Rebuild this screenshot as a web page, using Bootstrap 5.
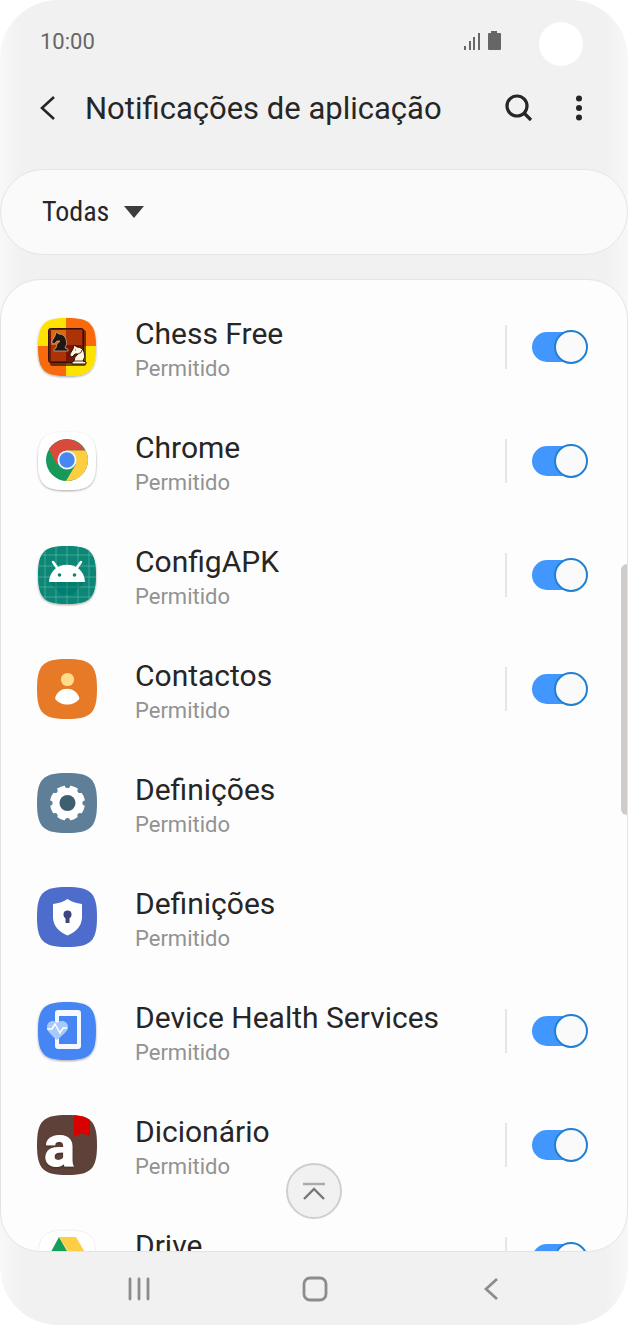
<!DOCTYPE html>
<html lang="pt">
<head>
<meta charset="utf-8">
<meta name="viewport" content="width=device-width, initial-scale=1">
<title>Notificações de aplicação</title>
<link rel="stylesheet" href="https://cdn.jsdelivr.net/npm/bootstrap@5.3.0/dist/css/bootstrap.min.css">
<style>
  body { background: #fff; color: #262626; font-family: Roboto, "Liberation Sans", sans-serif; }
  svg { display: block; flex: none; }
  .phone { border-radius: 58px; background: linear-gradient(90deg, #f8f8f8, #f4f4f4 12px, #f1f1f1 24px, #f1f1f1 calc(100% - 24px), #f4f4f4 calc(100% - 12px), #f8f8f8); }
  .status-bar { height: 80px; padding-top: 2px; padding-left: 40px; padding-right: 127px; color: #666; font-size: 22px; }
  .camera { top: 22px; right: 45px; width: 44px; height: 44px; background: #fff; }
  .title-bar { height: 56px; margin-bottom: 33px; padding-left: 37px; padding-right: 46px; }
  .title-bar h1 { font-size: 31px; line-height: 40px; padding-top: 2px; font-weight: 400; margin-left: 27px; }
  .more { margin-left: 43px; }
  .plain { border: 0; padding: 0; background: transparent; color: inherit; }
  .panel { border: 1px solid #e4e4e4; background: #fdfdfd; }
  .filter { height: 86px; border-radius: 43px; margin-bottom: 24px; padding-left: 41px; background: #fafafa; }
  .filter button { font-family: "Roboto Condensed", Roboto, "Liberation Sans", sans-serif; font-size: 28px; gap: 15px; }
  .app-list { border-radius: 40px; padding-top: 10px; min-height: 0; }
  .app-row { height: 114px; padding-left: 36px; padding-right: 39px; }
  .app-icon { width: 60px; height: 60px; margin-right: 38px; overflow: visible; }
  .app-text { padding-top: 8px; }
  .app-name { font-size: 30px; line-height: 36px; }
  .app-state { font-size: 22px; line-height: 34px; color: #929292; }
  .divider { width: 2px; height: 44px; background: #e6e6e6; margin-right: 25px; }
  .toggle { appearance: none; position: relative; width: 56px; height: 34px; margin: 0; flex: none; }
  .toggle::before { content: ""; position: absolute; top: 2px; left: 0; width: 50px; height: 30px; border-radius: 15px; background: #bbb; }
  .toggle::after { content: ""; position: absolute; top: 0; left: 0; width: 34px; height: 34px; border-radius: 50%; border: 2px solid #999; background: #fafafa; }
  .toggle:checked::before { background: #4297ff; }
  .toggle:checked::after { left: auto; right: 0; border-color: #2280d2; }
  .scroll-thumb { top: 284px; right: -1px; width: 7px; height: 251px; border-radius: 6px 0 0 6px; background: #cecbc8; }
  .to-top { bottom: 32px; left: 50%; margin-left: -28px; width: 56px; height: 56px; border: 2px solid #cfcfcf; border-radius: 50%; background: #f1f1f1; padding: 0; }
  .system-nav { height: 73px; padding-left: 51px; padding-right: 49px; }
</style>
</head>
<body>
<svg width="0" height="0" class="position-absolute" aria-hidden="true">
  <defs>
    <path id="squircle" d="M30 0C54 0 60 6 60 30S54 60 30 60 0 54 0 30 6 0 30 0Z"/>
    <clipPath id="clip"><use href="#squircle"/></clipPath>
    <clipPath id="clipSmall"><path d="M30 1C53 1 59 7 59 30S53 59 30 59 1 53 1 30 7 1 30 1Z"/></clipPath>
    <path id="knight" d="M3 19V17L5 16Q5 12 9 9L6 9 3 12 1 11 1 9 4 4 5 0 8 2Q13 2 15 7 17 12 14 16L17 17V19Z"/>
    <filter id="shade" x="-20%" y="-20%" width="140%" height="140%"><feDropShadow dx="0" dy="1" stdDeviation="1" flood-opacity="0.35"/></filter>
  </defs>
</svg>

<div class="phone d-flex flex-column vh-100 position-relative overflow-hidden">
  <header class="flex-shrink-0">
    <div class="status-bar d-flex align-items-center justify-content-between">
      <time>10:00</time>
      <svg width="37" height="20" viewBox="0 0 37 20" fill="#666"><path d="M0 15h2v4H0zM5 10h2v9H5zM9 6h2v13H9zM14 2h2v17h-2zM27 0h6v2h3q1 0 1 1v15q0 1-1 1H25q-1 0-1-1V3q0-1 1-1h2z"/></svg>
    </div>
    <div class="camera position-absolute rounded-circle"></div>
    <div class="title-bar d-flex align-items-center">
      <button class="plain" type="button" aria-label="Voltar"><svg width="21" height="26" viewBox="0 0 21 26" fill="none" stroke="#262626" stroke-width="2.600"><path d="M17 2 5 13l12 11"/></svg></button>
      <h1 class="mb-0 flex-grow-1">Notificações de aplicação</h1>
      <button class="plain" type="button" aria-label="Procurar"><svg width="28" height="28" viewBox="0 0 28 28" fill="none" stroke="#262626" stroke-width="3.200"><circle cx="12" cy="12" r="10"/><path d="m19 19 7 7"/></svg></button>
      <button class="plain more" type="button" aria-label="Mais opções"><svg width="6" height="26" viewBox="0 0 6 26" fill="#262626"><circle cx="3" cy="3.500" r="3"/><circle cx="3" cy="13" r="3"/><circle cx="3" cy="22.500" r="3"/></svg></button>
    </div>
  </header>

  <div class="panel filter flex-shrink-0 d-flex align-items-center">
    <button class="plain d-flex align-items-center" type="button">Todas <svg width="20" height="12" viewBox="0 0 20 12"><path fill="#3c3c3c" d="M0 0h20L10 12z"/></svg></button>
  </div>

  <main class="panel app-list flex-grow-1 position-relative overflow-hidden">
    <div class="app-row d-flex align-items-center">
      <svg class="app-icon" viewBox="0 0 60 60" aria-hidden="true"><g filter="url(#shade)"><g clip-path="url(#clipSmall)"><path fill="#fee204" d="M0 0h29v29H0zM29 29h31v31H29z"/><path fill="#f86a08" d="M29 0h31v29H29zM0 29h29v31H0z"/></g></g><rect x="13" y="13" width="36" height="36" rx="2" fill="#2a0804" opacity=".65"/><rect x="11.500" y="11.500" width="35" height="34" rx="2" fill="#781505" stroke="#351006"/><path fill="#d56a12" d="M14 13h15v15H14z"/><path fill="#ac3208" d="M29 13h16v15H29zM14 28h15v16H14z"/><use href="#knight" x="14" y="15" fill="#1e1713" stroke="#e4b68d" stroke-width=".7"/><use href="#knight" x="32" y="28" fill="#fff6dd" stroke="#26120a" stroke-width="1"/><path fill="none" stroke="#26120a" stroke-width=".8" d="M37 44h10M41 37q4-1 4-4M38 33h1"/></svg>
      <div class="app-text flex-grow-1"><label class="app-name d-block" for="t1">Chess Free</label><div class="app-state">Permitido</div></div>
      <div class="divider"></div><input class="toggle" type="checkbox" role="switch" id="t1" checked>
    </div>
    <div class="app-row d-flex align-items-center">
      <svg class="app-icon" viewBox="0 0 60 60" aria-hidden="true"><path filter="url(#shade)" fill="#fff" d="M30 1C53 1 59 7 59 30S53 59 30 59 1 53 1 30 7 1 30 1Z"/><circle cx="30" cy="29" r="21" fill="#159a5b"/><path fill="#d94a3d" d="M12 18A21 21 0 0 1 48.200 19.500H30L20 34z"/><path fill="#fdcd42" d="M30 19.500h18.700A21 21 0 0 1 29 50L39 33z"/><circle cx="30" cy="29" r="9.500" fill="#f4f6fa"/><circle cx="30" cy="29" r="7.700" fill="#4688f1"/></svg>
      <div class="app-text flex-grow-1"><label class="app-name d-block" for="t2">Chrome</label><div class="app-state">Permitido</div></div>
      <div class="divider"></div><input class="toggle" type="checkbox" role="switch" id="t2" checked>
    </div>
    <div class="app-row d-flex align-items-center">
      <svg class="app-icon" viewBox="0 0 60 60" aria-hidden="true"><g filter="url(#shade)"><g clip-path="url(#clipSmall)"><path fill="#078675" d="M0 0h60v60H0z"/><path fill="none" stroke="#56afa3" stroke-width=".8" d="M8 0v60M19 0v60M30 0v60M41 0v60M52 0v60M0 10h60M0 21h60M0 32h60M0 42h60M0 52h60"/><path fill="#04766a" d="m12 37 36 0-13 13H25z" opacity=".5"/></g></g><path stroke="#fff" stroke-width="2.600" stroke-linecap="round" d="m16 17 5 7m23-7-5 7"/><path fill="#fff" d="M12 37C13 14 47 14 48 37z"/><circle cx="22.500" cy="30" r="1.800" fill="#078675"/><circle cx="37.500" cy="30" r="1.800" fill="#078675"/></svg>
      <div class="app-text flex-grow-1"><label class="app-name d-block" for="t3">ConfigAPK</label><div class="app-state">Permitido</div></div>
      <div class="divider"></div><input class="toggle" type="checkbox" role="switch" id="t3" checked>
    </div>
    <div class="app-row d-flex align-items-center">
      <svg class="app-icon" viewBox="0 0 60 60" aria-hidden="true"><use href="#squircle" fill="#e67a27"/><circle cx="30.500" cy="20.500" r="6.600" fill="#ffdd8a"/><path fill="#fff" d="M18 39.500C21 26.500 39 26.500 42.500 39.500 37 47.500 23.500 47.500 18 39.500Z"/></svg>
      <div class="app-text flex-grow-1"><label class="app-name d-block" for="t4">Contactos</label><div class="app-state">Permitido</div></div>
      <div class="divider"></div><input class="toggle" type="checkbox" role="switch" id="t4" checked>
    </div>
    <div class="app-row d-flex align-items-center">
      <svg class="app-icon" viewBox="0 0 60 60" aria-hidden="true"><use href="#squircle" fill="#5f7f98"/><circle cx="30.500" cy="30" r="17.500" fill="#fff"/><g fill="#5f7f98"><circle cx="30.500" cy="12.500" r="2.600"/><circle cx="30.500" cy="47.500" r="2.600"/><circle cx="13" cy="30" r="2.600"/><circle cx="48" cy="30" r="2.600"/><circle cx="18" cy="17.500" r="2.600"/><circle cx="43" cy="17.500" r="2.600"/><circle cx="18" cy="42.500" r="2.600"/><circle cx="43" cy="42.500" r="2.600"/></g><circle cx="30.500" cy="30" r="8" fill="#3d5f70"/></svg>
      <div class="app-text flex-grow-1"><div class="app-name">Definições</div><div class="app-state">Permitido</div></div>
    </div>
    <div class="app-row d-flex align-items-center">
      <svg class="app-icon" viewBox="0 0 60 60" aria-hidden="true"><use href="#squircle" fill="#4d6ccb"/><path fill="#fff" d="M30.500 12Q36 16 45 17V31Q44 43 30.500 48.500 17 43 16 31V17Q25 16 30.500 12Z"/><circle cx="30.500" cy="27.500" r="4" fill="#3d4480"/><path fill="#3d4480" d="M28.500 29h4v7h-4z"/></svg>
      <div class="app-text flex-grow-1"><div class="app-name">Definições</div><div class="app-state">Permitido</div></div>
    </div>
    <div class="app-row d-flex align-items-center">
      <svg class="app-icon" viewBox="0 0 60 60" aria-hidden="true"><path filter="url(#shade)" fill="#4486f4" d="M30 1C53 1 59 7 59 30S53 59 30 59 1 53 1 30 7 1 30 1Z"/><path fill="#f5f9ff" fill-rule="evenodd" d="M21 9h20q3 0 3 3v33q0 3-3 3H21q-3 0-3-3V12q0-3 3-3zm1 6v28h18V15z"/><path fill="#a9c8fc" d="M20 39C13 33 10 30 10 26 10 20 17 18 20 22 24 18 31 20 31 26 31 30 27 33 20 39Z"/><path fill="none" stroke="#fff" stroke-width="1.500" d="M10 28h5l3-5 5 9 3-5h4"/></svg>
      <div class="app-text flex-grow-1"><label class="app-name d-block" for="t7">Device Health Services</label><div class="app-state">Permitido</div></div>
      <div class="divider"></div><input class="toggle" type="checkbox" role="switch" id="t7" checked>
    </div>
    <div class="app-row d-flex align-items-center">
      <svg class="app-icon" viewBox="0 0 60 60" aria-hidden="true"><g clip-path="url(#clip)"><path fill="#5e4139" d="M0 0h60v60H0z"/><path fill="#d90000" d="M37 0h16v22l-8-4-8 4z"/></g><text x="7" y="51" font-family="Roboto, sans-serif" font-weight="700" font-size="58" fill="#fff" stroke="#fff" filter="url(#shade)">a</text></svg>
      <div class="app-text flex-grow-1"><label class="app-name d-block" for="t8">Dicionário</label><div class="app-state">Permitido</div></div>
      <div class="divider"></div><input class="toggle" type="checkbox" role="switch" id="t8" checked>
    </div>
    <div class="app-row d-flex align-items-center">
      <svg class="app-icon" viewBox="0 0 60 60" aria-hidden="true"><path fill="#fff" stroke="#e8e8e8" stroke-width=".7" d="M30 1C53 1 59 7 59 30S53 59 30 59 1 53 1 30 7 1 30 1Z"/><path fill="#159e5a" d="m22 8 8 14-14 24-7-14z"/><path fill="#ffce44" d="M22 8h17l14 24H37z"/><path fill="#4688f1" d="M24 32h29l-8 14H16z"/></svg>
      <div class="app-text flex-grow-1"><label class="app-name d-block" for="t9">Drive</label><div class="app-state">Permitido</div></div>
      <div class="divider"></div><input class="toggle" type="checkbox" role="switch" id="t9" checked>
    </div>
    <div class="scroll-thumb position-absolute"></div>
    <button class="to-top position-absolute d-flex align-items-center justify-content-center" type="button" aria-label="Ir para o início"><svg width="22" height="18" viewBox="0 0 22 18" fill="none" stroke-width="2.400"><path stroke="#aaa" d="M0 2h22"/><path stroke="#777" d="M1 17 11 7l10 10"/></svg></button>
  </main>

  <nav class="system-nav flex-shrink-0 d-flex align-items-center" aria-label="Sistema">
    <button class="plain d-flex justify-content-center flex-fill w-100" type="button" aria-label="Recentes"><svg width="24" height="24" viewBox="0 0 24 24" fill="none" stroke="#8c8c8c" stroke-width="2.800" stroke-linecap="round"><path d="M3 2v20M12 2v20M21 2v20"/></svg></button>
    <button class="plain d-flex justify-content-center flex-fill w-100" type="button" aria-label="Início"><svg width="26" height="26" viewBox="0 0 26 26" fill="none" stroke="#8c8c8c" stroke-width="2.800"><rect x="2" y="2" width="22" height="22" rx="6"/></svg></button>
    <button class="plain d-flex justify-content-center flex-fill w-100" type="button" aria-label="Voltar"><svg width="14" height="24" viewBox="0 0 14 24" fill="none" stroke="#8c8c8c" stroke-width="2.800"><path d="M13 2 2 12l11 10"/></svg></button>
  </nav>
</div>
<script src="https://cdn.jsdelivr.net/npm/bootstrap@5.3.0/dist/js/bootstrap.bundle.min.js"></script>
</body>
</html>
